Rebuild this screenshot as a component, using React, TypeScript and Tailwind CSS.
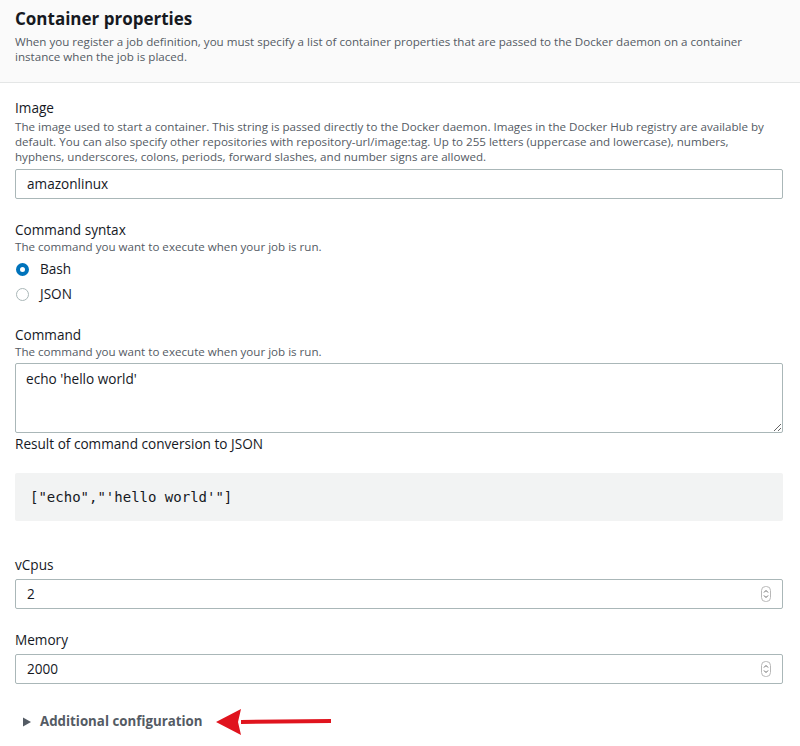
import { useState } from 'react';

const font = { fontFamily: '"Open Sans", "Liberation Sans", sans-serif' };

function Spinner() {
  return (
    <svg width="10" height="16" viewBox="0 0 10 16" className="shrink-0">
      <rect x="0.5" y="0.5" width="9" height="15" rx="4" fill="#fff" stroke="#b8b8b8" />
      <path d="M3 6.5 L5 4.5 L7 6.5" fill="none" stroke="#666" strokeWidth="1" />
      <path d="M3 9.5 L5 11.5 L7 9.5" fill="none" stroke="#666" strokeWidth="1" />
    </svg>
  );
}

function TextBox({ value, spinner }: { value: string; spinner?: boolean }) {
  return (
    <div className="flex h-[30px] items-center rounded-[2px] border border-[#aab7b8] bg-white px-[11px] text-[13.6px] text-[#16191f]">
      <span className="flex-1">{value}</span>
      {spinner && <Spinner />}
    </div>
  );
}

function Radio({ checked, label }: { checked: boolean; label: string }) {
  return (
    <div className="flex h-[25px] items-center gap-[11px]">
      {checked ? (
        <span className="ml-px h-[13px] w-[13px] rounded-full border-[4px] border-[#0073bb] bg-white" />
      ) : (
        <span className="ml-px h-[13px] w-[13px] rounded-full border border-[#aab7b8] bg-white" />
      )}
      <span className="text-[13.6px] text-[#16191f]">{label}</span>
    </div>
  );
}

export default function App() {
  const [command, setCommand] = useState("echo 'hello world'");

  return (
    <div className="h-[746px] w-[800px] overflow-hidden bg-white" style={font}>
      <div className="border-b border-[#e4e6e6] bg-[#fafafa] px-[15px] pb-[18px] pt-[7px]">
        <h2 className="text-[17px] font-bold leading-[24px] text-[#16191f]">Container properties</h2>
        <p className="mt-[3px] pr-[40px] text-[11.6px] leading-[15px] text-[#545b64]">
          When you register a job definition, you must specify a list of container properties that are passed to the Docker daemon on a container instance when the job is placed.
        </p>
      </div>

      <div className="flex flex-col pl-[15px] pr-[17px] pt-[16px]">
        <div className="text-[13.6px] leading-[18px] text-[#16191f]">Image</div>
        <p className="mt-[2px] pr-[4px] text-[11.6px] leading-[15px] text-[#545b64]">
          The image used to start a container. This string is passed directly to the Docker daemon. Images in the Docker Hub registry are available by default. You can also specify other repositories with repository-url/image:tag. Up to 255 letters (uppercase and lowercase), numbers, hyphens, underscores, colons, periods, forward slashes, and number signs are allowed.
        </p>
        <div className="mt-[5px]">
          <TextBox value="amazonlinux" />
        </div>

        <div className="mt-[22px] text-[13.6px] leading-[18px] text-[#16191f]">Command syntax</div>
        <p className="text-[11.6px] leading-[15px] text-[#545b64]">The command you want to execute when your job is run.</p>
        <div className="mt-[3px] flex flex-col">
          <Radio checked label="Bash" />
          <Radio checked={false} label="JSON" />
        </div>

        <div className="mt-[19px] text-[13.6px] leading-[18px] text-[#16191f]">Command</div>
        <p className="text-[11.6px] leading-[15px] text-[#545b64]">The command you want to execute when your job is run.</p>
        <textarea
          value={command}
          onChange={(e) => setCommand(e.target.value)}
          className="mt-[4px] block h-[70px] w-full rounded-[2px] border border-[#aab7b8] bg-white px-[10px] py-[5px] text-[13.6px] leading-[20px] text-[#16191f] outline-none"
          style={font}
        />
        <div className="mt-[2px] text-[13.6px] leading-[18px] text-[#16191f]">Result of command conversion to JSON</div>

        <div
          className="mt-[20px] flex h-[48px] items-center rounded-[2px] bg-[#f2f3f3] px-[15px] text-[14px] text-[#16191f]"
          style={{ fontFamily: '"DejaVu Sans Mono", "Liberation Mono", monospace' }}
        >
          ["echo","'hello world'"]
        </div>

        <div className="mt-[35px] text-[13.6px] leading-[18px] text-[#16191f]">vCpus</div>
        <div className="mt-[5px]">
          <TextBox value="2" spinner />
        </div>

        <div className="mt-[22px] text-[13.6px] leading-[18px] text-[#16191f]">Memory</div>
        <div className="mt-[5px]">
          <TextBox value="2000" spinner />
        </div>

        <div className="mt-[23px] flex items-center">
          <svg width="10" height="10" viewBox="0 0 10 10" className="ml-[7px] mr-[8px]">
            <path d="M1 0.5 L9 5 L1 9.5 Z" fill="#545b64" />
          </svg>
          <span className="text-[13.3px] font-bold text-[#545b64]">Additional configuration</span>
          <svg width="120" height="30" viewBox="0 0 120 30" className="ml-[12px]">
            <path d="M26 13 L116 12 L116 16 L26 17 Z" fill="#e0141e" />
            <path d="M1 15 L26 2 L23 15 L26 28 Z" fill="#e0141e" />
          </svg>
        </div>
      </div>
    </div>
  );
}
